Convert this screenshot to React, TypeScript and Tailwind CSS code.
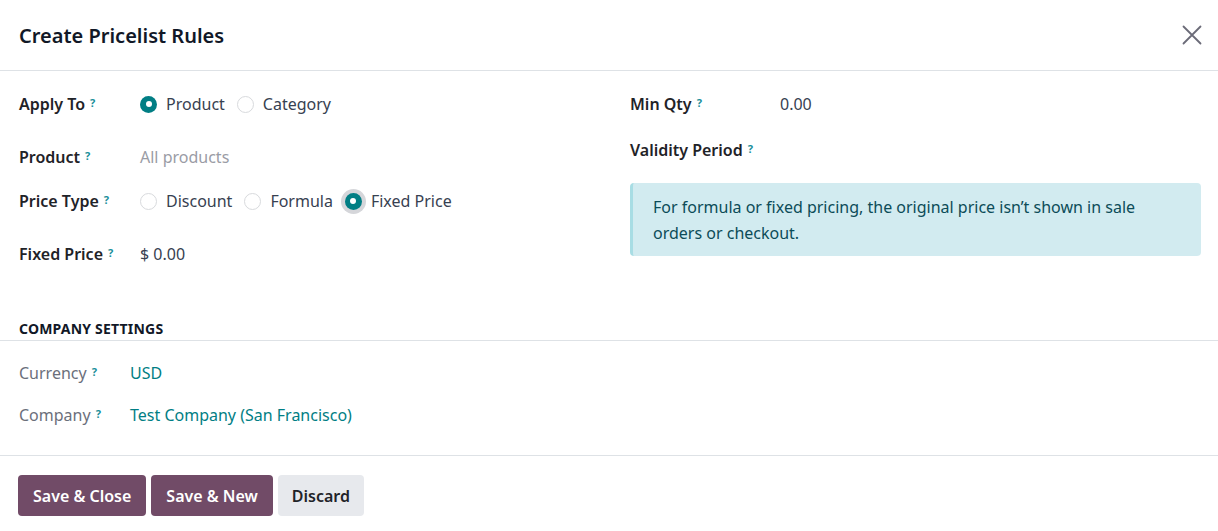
import React, { useState } from 'react';

const Help: React.FC = () => (
  <sup className="ml-[5px] text-[11px] font-bold text-[#1a8f9a] relative top-[-3px]">?</sup>
);

interface RadioProps {
  label: string;
  checked: boolean;
  focused?: boolean;
  onClick: () => void;
}

const Radio: React.FC<RadioProps> = ({ label, checked, focused, onClick }) => (
  <button type="button" onClick={onClick} className="flex items-center mr-[12px]">
    <span
      className={`flex items-center justify-center w-[17px] h-[17px] rounded-full ${
        checked ? 'bg-[#017e84]' : 'border border-[#d8dadd] bg-white'
      } ${focused ? 'ring-4 ring-[#d5d6da]' : ''}`}
    >
      {checked && <span className="w-[6px] h-[6px] rounded-full bg-white" />}
    </span>
    <span className="ml-[9px] text-[#374151]">{label}</span>
  </button>
);

const App: React.FC = () => {
  const [applyTo, setApplyTo] = useState('product');
  const [priceType, setPriceType] = useState('fixed');

  return (
    <div
      className="w-[1218px] h-[531px] bg-white text-[16px] text-[#1f2937] overflow-hidden"
      style={{ fontFamily: '"Noto Sans", "Open Sans", sans-serif' }}
    >
      {/* Header */}
      <div className="h-[71px] pl-[19px] pr-[16px] flex items-center justify-between border-b border-[#dee2e6]">
        <h2 className="text-[20px] font-semibold text-[#111827] mt-[2px]">Create Pricelist Rules</h2>
        <button type="button" className="text-[#6b6b78]">
          <svg width="20" height="20" viewBox="0 0 20 20" fill="none" stroke="currentColor" strokeWidth="1.8" strokeLinecap="round">
            <path d="M1.5 1.5 L18.5 18.5 M18.5 1.5 L1.5 18.5" />
          </svg>
        </button>
      </div>

      {/* Main form */}
      <div className="flex px-[19px] h-[240px]">
        <div className="w-[611px] pt-[17px]">
          <div className="flex items-center h-[32px]">
            <div className="w-[121px] font-semibold text-[#1f2328]">Apply To<Help /></div>
            <Radio label="Product" checked={applyTo === 'product'} onClick={() => setApplyTo('product')} />
            <Radio label="Category" checked={applyTo === 'category'} onClick={() => setApplyTo('category')} />
          </div>
          <div className="flex items-center h-[32px] mt-[21px]">
            <div className="w-[121px] font-semibold text-[#1f2328]">Product<Help /></div>
            <span className="text-[#9a9ca5]">All products</span>
          </div>
          <div className="flex items-center h-[32px] mt-[12px]">
            <div className="w-[121px] font-semibold text-[#1f2328]">Price Type<Help /></div>
            <Radio label="Discount" checked={priceType === 'discount'} onClick={() => setPriceType('discount')} />
            <Radio label="Formula" checked={priceType === 'formula'} onClick={() => setPriceType('formula')} />
            <Radio label="Fixed Price" checked={priceType === 'fixed'} focused onClick={() => setPriceType('fixed')} />
          </div>
          <div className="flex items-center h-[32px] mt-[21px]">
            <div className="w-[121px] font-semibold text-[#1f2328]">Fixed Price<Help /></div>
            <span className="text-[#374151]">$ 0.00</span>
          </div>
        </div>

        <div className="flex-1 pt-[17px]">
          <div className="flex items-center h-[32px]">
            <div className="w-[150px] font-semibold text-[#1f2328]">Min Qty<Help /></div>
            <span className="text-[#374151]">0.00</span>
          </div>
          <div className="flex items-center h-[32px] mt-[14px]">
            <div className="font-semibold text-[#1f2328]">Validity Period<Help /></div>
          </div>
          <div className="mt-[17px] mr-[-2px] h-[73px] rounded-[4px] bg-[#d2ebf0] border-l-[3px] border-[#a8dde4] pl-[20px] pr-[16px] pt-[11px] text-[#0c4c58] leading-[26px]">
            For formula or fixed pricing, the original price isn’t shown in sale orders or checkout.
          </div>
        </div>
      </div>

      {/* Company settings */}
      <div className="mt-[8px] border-b border-[#dee2e6] px-[19px] pb-[1px]">
        <h3 className="text-[14px] font-bold uppercase tracking-[0.2px] text-[#111827] leading-[20px]">Company Settings</h3>
      </div>
      <div className="px-[19px] pt-[16px]">
        <div className="flex items-center h-[32px]">
          <div className="w-[111px] text-[#6b6f7b]">Currency<Help /></div>
          <span className="text-[#017e84]">USD</span>
        </div>
        <div className="flex items-center h-[32px] mt-[10px]">
          <div className="w-[111px] text-[#6b6f7b]">Company<Help /></div>
          <span className="text-[#017e84]">Test Company (San Francisco)</span>
        </div>
      </div>

      {/* Footer */}
      <div className="mt-[24px] border-t border-[#dee2e6] px-[18px] pt-[19px] flex gap-[5px]">
        <button type="button" className="h-[41px] px-[15px] rounded-[4px] bg-[#714b67] text-white font-semibold">
          Save &amp; Close
        </button>
        <button type="button" className="h-[41px] px-[15px] rounded-[4px] bg-[#714b67] text-white font-semibold">
          Save &amp; New
        </button>
        <button type="button" className="h-[41px] px-[14px] rounded-[4px] bg-[#e7e9ed] text-[#1f2328] font-semibold">
          Discard
        </button>
      </div>
    </div>
  );
};

export default App;
